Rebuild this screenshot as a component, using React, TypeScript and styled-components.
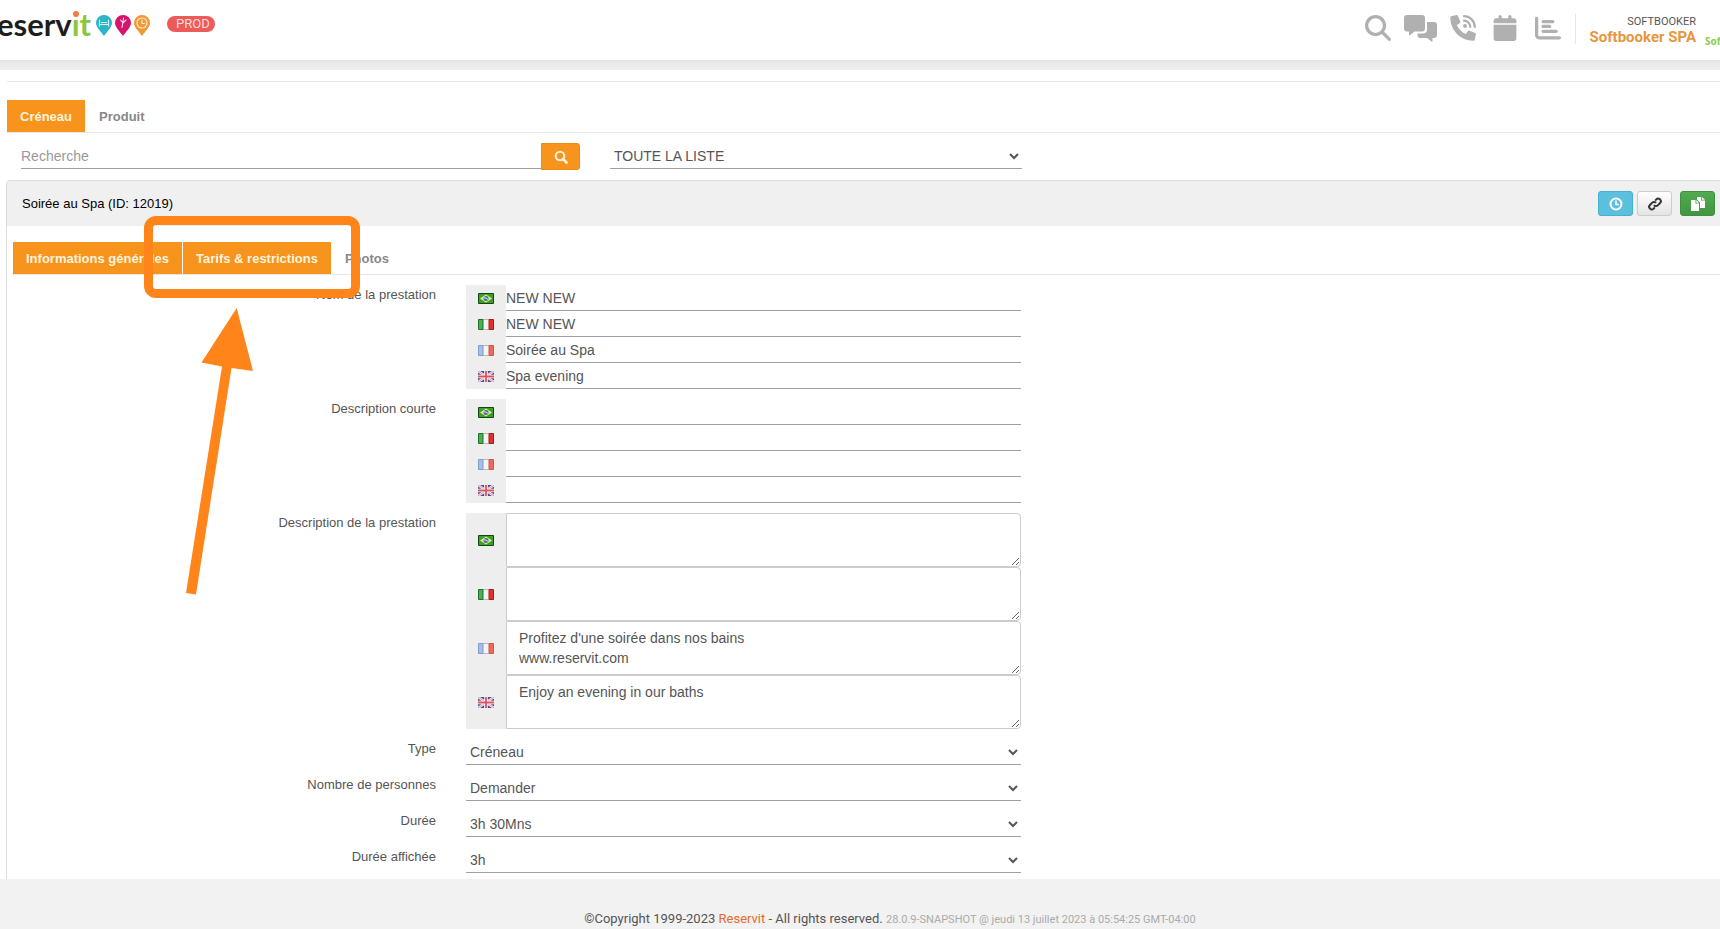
import React from 'react';
import styled, { createGlobalStyle } from 'styled-components';
import { FaMagnifyingGlass, FaCalendar, FaChartBar } from 'react-icons/fa6';

const accent = '#f7941e';
const marker = '#ff851b';
const line = '#e7e7e7';
const fieldLine = '#a0a0a0';

const GlobalStyle = createGlobalStyle`
  *, *::before, *::after { box-sizing: border-box; }
  html { background: #f2f2f2; overflow-x: hidden; }
  body {
    margin: 0;
    color: #555;
    font: 13px/20px "Liberation Sans", Arial, sans-serif;
  }
  button, input, select, textarea { font-family: inherit; }
`;

const Page = styled.div`
  position: relative;
  overflow: hidden;
`;

const Header = styled.header`
  display: flex;
  align-items: flex-start;
  height: 60px;
  background: #fff;
`;

const Brand = styled.a`
  margin-left: -3px;
  padding-top: 8px;
  color: #1d1d1b;
  font: 700 31px/32px Lato, sans-serif;
  text-decoration: none;

  em {
    position: relative;
    color: #8cc63f;
    font-style: normal;
  }

  em::before {
    content: "";
    position: absolute;
    left: 1px;
    top: 6px;
    width: 6px;
    height: 6px;
    border-radius: 50%;
    background: #ef7d3b;
    box-shadow: 0 0 0 1px #fff;
  }
`;

const Pins = styled.span`
  display: flex;
  gap: 3px;
  padding: 15px 0 0 5px;
`;

const Badge = styled.span`
  margin: 16px 0 0 17px;
  padding: 0 5px 0 9px;
  border-radius: 9px;
  background: #ec5a5a;
  color: #ffdcdc;
  font: 13px/16px Roboto, sans-serif;
`;

const Tools = styled.nav`
  display: flex;
  gap: 13px;
  margin-left: auto;
  padding-top: 13px;
`;

const ToolButton = styled.button<{ $wide?: boolean }>`
  display: flex;
  align-items: center;
  justify-content: center;
  width: ${(p) => (p.$wide ? 33 : 26)}px;
  height: 30px;
  padding: 0;
  border: 0;
  background: none;
  color: #b0b0b0;
`;

const Account = styled.div`
  height: 30px;
  margin: 14px 0 0 14px;
  padding-left: 14px;
  border-left: 1px solid ${line};
  color: #555;
  font: 11px/15px Roboto, sans-serif;
  text-align: right;

  strong {
    display: block;
    color: #e8963c;
    font-size: 15px;
    font-weight: 700;
    line-height: 17px;
  }
`;

const Partner = styled.div`
  width: 15px;
  margin: 31px 0 0 9px;
  color: #8ccf50;
  font: 700 10px/20px "Open Sans", sans-serif;
  white-space: nowrap;
`;

const Main = styled.main`
  padding: 11px 0 0 6px;
  background: #fff;
`;

const HeaderShade = styled.div`
  height: 10px;
  background: linear-gradient(#e6e6e6, #efefef);
`;

const TabBar = styled.div<{ $inset?: boolean }>`
  display: flex;
  gap: 1px;
  margin-left: ${(p) => (p.$inset ? 6 : 1)}px;
  padding-top: ${(p) => (p.$inset ? 16 : 18)}px;
  border: solid ${line};
  border-width: ${(p) => (p.$inset ? 0 : 1)}px 0 1px;
`;

const Tab = styled.button<{ $active?: boolean }>`
  height: 32px;
  padding: 0 13px;
  border: 0;
  background: ${(p) => (p.$active ? accent : 'transparent')};
  color: ${(p) => (p.$active ? '#fff3dc' : '#888')};
  font-size: 13px;
  font-weight: 700;
`;

const Filters = styled.form`
  display: grid;
  grid-template-columns: 559fr 412fr 668fr;
  column-gap: 30px;
  padding: 10px 0 10px 15px;
`;

const SearchGroup = styled.div`
  display: flex;
`;

const Input = styled.input`
  flex: 1;
  min-width: 0;
  height: 26px;
  padding: 0;
  border: 0;
  border-bottom: 1px solid ${fieldLine};
  background: #fff;
  color: #555;
  font-size: 14px;
  outline: 0;

  &::placeholder { color: #999; opacity: 1; }
`;

const Select = styled.select`
  width: 100%;
  height: 26px;
  padding: 0;
  border: 0;
  border-bottom: 1px solid ${fieldLine};
  border-radius: 0;
  background: #fff;
  color: #555;
  font-size: 14px;
`;

const SearchButton = styled.button`
  display: flex;
  align-items: center;
  justify-content: center;
  width: 39px;
  height: 27px;
  padding: 0;
  border: 1px solid #ee8a12;
  border-radius: 0 3px 3px 0;
  background: ${accent};
  color: #fff3dc;
`;

const Panel = styled.section`
  border: solid #ddd;
  border-width: 1px 0 0 1px;
  border-radius: 4px 0 0 0;
`;

const PanelHeading = styled.div`
  display: flex;
  align-items: center;
  gap: 4px;
  height: 45px;
  padding: 0 5px 0 15px;
  background: #f0f0f0;
  color: #000;
`;

const PanelTitle = styled.h1`
  flex: 1;
  margin: 0;
  font-size: 13px;
  font-weight: 400;
`;

const tones = {
  info: { fill: '#5bc0de', edge: '#46b0d0', ink: '#fff' },
  plain: { fill: 'linear-gradient(#fff, #e4e4e4)', edge: '#ccc', ink: '#333' },
  success: { fill: 'linear-gradient(#51ab51, #419641)', edge: '#3e8f3e', ink: '#fff' },
};

const ActionButton = styled.button<{ $tone: keyof typeof tones }>`
  display: flex;
  align-items: center;
  justify-content: center;
  width: 35px;
  height: 25px;
  padding: 0;
  border: 1px solid ${(p) => tones[p.$tone].edge};
  border-radius: 3px;
  background: ${(p) => tones[p.$tone].fill};
  color: ${(p) => tones[p.$tone].ink};

  &:last-child { margin-left: 4px; }
`;

const Form = styled.form`
  display: grid;
  row-gap: 10px;
  padding: 10px 0 6px 6px;
`;

const Row = styled.div`
  display: grid;
  grid-template-columns: 423fr 555fr 669fr;
  column-gap: 30px;
`;

const Label = styled.label`
  text-align: right;
`;

const Languages = styled.div`
  display: grid;
`;

const LanguageRow = styled.div`
  display: flex;
`;

const FlagCell = styled.span`
  display: flex;
  align-items: center;
  justify-content: center;
  width: 40px;
  background: #eee;
`;

const TextArea = styled.textarea`
  display: block;
  flex: 1;
  min-width: 0;
  height: 54px;
  padding: 6px 12px;
  border: 1px solid #ccc;
  border-radius: 0 4px 4px 0;
  background: #fff;
  color: #555;
  font-size: 14px;
  line-height: 20px;
  overflow: hidden;
`;

const Footer = styled.footer`
  padding: 30px 0 0 60px;
  background: #f2f2f2;
  font-family: Roboto, sans-serif;
  text-align: center;

  a { color: #e8692c; text-decoration: none; }
  small { color: #aaa; font-size: 11px; }
`;

const Highlight = styled.div`
  position: absolute;
  top: 216px;
  left: 144px;
  width: 216px;
  height: 82px;
  border: 9px solid ${marker};
  border-radius: 12px;
  pointer-events: none;
`;

const Arrow = styled.svg`
  position: absolute;
  top: 308px;
  left: 186px;
  pointer-events: none;
`;

function Pin({ color, children }: { color: string; children: React.ReactNode }) {
  return (
    <svg width="16" height="21" viewBox="0 0 16 21" aria-hidden="true">
      <path d="M8 0a8 8 0 0 1 8 8c0 4-4.500 8-8 13C4.500 16 0 12 0 8a8 8 0 0 1 8-8z" fill={color} />
      <g fill="none" stroke="#fff" strokeWidth="1.100" strokeOpacity=".85" strokeLinecap="round">{children}</g>
    </svg>
  );
}

function ChatIcon() {
  return (
    <svg width="33" height="27" viewBox="0 0 33 27" fill="currentColor" aria-hidden="true">
      <path d="M3 0h15a3 3 0 0 1 3 3v10.500a3 3 0 0 1-3 3h-7.500L6 20.200c-.5.400-1 .1-1-.5v-3.200H3a3 3 0 0 1-3-3V3a3 3 0 0 1 3-3z" />
      <path d="M23 7h7a3 3 0 0 1 3 3v10a3 3 0 0 1-3 3h-1.500v3c0 .6-.6.900-1 .5L23 23h-6.500a3 3 0 0 1-3-3v-1.500H19a4 4 0 0 0 4-4z" />
    </svg>
  );
}

function PhoneIcon() {
  return (
    <svg width="26" height="26" viewBox="0 0 26 26" aria-hidden="true">
      <path
        d="M1.300 1.300 6.500.1c.6-.1 1.200.2 1.400.7l2.400 5.600c.2.500.1 1.100-.4 1.500l-3 2.400c1.800 3.800 4.900 6.900 8.800 8.800l2.400-3c.4-.5 1-.6 1.500-.4l5.600 2.400c.5.200.8.800.7 1.400l-1.200 5.200c-.1.600-.6 1-1.200 1C10.500 25.700.3 15.500.3 2.500c0-.6.400-1.100 1-1.200z"
        fill="currentColor"
      />
      <g fill="none" stroke="currentColor" strokeWidth="2.200" strokeLinecap="round">
        <path d="M14 1.200A10.800 10.800 0 0 1 24.800 12" />
        <path d="M14 5.700A6.300 6.300 0 0 1 20.300 12" />
      </g>
      <circle cx="15" cy="11" r="2" fill="currentColor" />
    </svg>
  );
}

function SearchIcon() {
  return (
    <svg width="14" height="14" viewBox="0 0 14 14" fill="none" stroke="currentColor" aria-hidden="true">
      <circle cx="6" cy="6" r="4.300" strokeWidth="2" />
      <path d="M9 9l3.500 3.500" strokeWidth="2.600" strokeLinecap="round" />
    </svg>
  );
}

function ClockIcon() {
  return (
    <svg width="14" height="14" viewBox="0 0 14 14" fill="none" stroke="currentColor" aria-hidden="true">
      <circle cx="7" cy="7" r="5.500" strokeWidth="2" />
      <path d="M7 3.600V7.500H9.800" strokeWidth="1.500" />
    </svg>
  );
}

function LinkIcon() {
  return (
    <svg width="14" height="14" viewBox="0 0 14 14" fill="none" stroke="currentColor" strokeWidth="2" aria-hidden="true">
      <g transform="rotate(-45 7 7)">
        <path d="M4.500 9.300H2.800a2.600 2.600 0 0 1 0-5.200H6a2.600 2.600 0 0 1 2.600 2.900" />
        <path d="M9.500 4.700h1.700a2.600 2.600 0 0 1 0 5.200H8A2.600 2.600 0 0 1 5.400 7" />
      </g>
    </svg>
  );
}

function DuplicateIcon() {
  return (
    <svg width="14" height="14" viewBox="0 0 14 14" fill="currentColor" aria-hidden="true">
      <path d="M0 3h4.500v3.500H8V14H0z" />
      <path d="M5.300 3 8 5.700H5.300z" />
      <path d="M6 0h4v3.500h4V11H9V5.500L6 2.400z" />
      <path d="M10.800 0 14 2.800h-3.200z" />
    </svg>
  );
}

type Country = 'br' | 'it' | 'fr' | 'gb';

const countryNames: Record<Country, string> = {
  br: 'Portugais',
  it: 'Italien',
  fr: 'Français',
  gb: 'Anglais',
};

function Tricolour({ left, right, leftEdge, rightEdge }: Record<'left' | 'right' | 'leftEdge' | 'rightEdge', string>) {
  return (
    <>
      <path d="M0 0h16v11H0z" fill="#f4f4f4" />
      <path d="M5 .5h6M5 10.500h6" stroke="#bbb" />
      <path d="M.5.5h4.500v10H.5z" fill={left} stroke={leftEdge} />
      <path d="M11 .5h4.500v10H11z" fill={right} stroke={rightEdge} />
    </>
  );
}

function Flag({ country }: { country: Country }) {
  return (
    <svg width="16" height="11" viewBox="0 0 16 11" aria-hidden="true">
      {country === 'br' && (
        <>
          <path d="M.5.5h15v10H.5z" fill="#3f9c35" stroke="#0c4a10" />
          <path d="M8 1.500 14 5.500 8 9.500 2 5.500z" fill="#e6ee6a" />
          <circle cx="8" cy="5.500" r="2.500" fill="#3b6fb0" />
          <path d="M5.800 4.800q2.500-.3 4.200 1.700" stroke="#dfefff" fill="none" />
        </>
      )}
      {country === 'it' && <Tricolour left="#4bb04f" leftEdge="#21702a" right="#e03030" rightEdge="#b01818" />}
      {country === 'fr' && <Tricolour left="#a5bfe8" leftEdge="#7f9bd0" right="#ea6a5c" rightEdge="#d0584c" />}
      {country === 'gb' && (
        <>
          <path d="M0 0h16v11H0z" fill="#4b4a8c" />
          <path d="M0 0 16 11M16 0 0 11" stroke="#f3eef5" strokeWidth="2.400" />
          <path d="M0 0 16 11M16 0 0 11" stroke="#d8707c" strokeWidth=".7" />
          <path d="M8 0v11M0 5.500h16" stroke="#fff" strokeWidth="3.600" />
          <path d="M8 0v11M0 5.500h16" stroke="#d9545f" strokeWidth="1.800" />
        </>
      )}
    </svg>
  );
}

const countries: Country[] = ['br', 'it', 'fr', 'gb'];

interface TranslatedProps {
  id: string;
  label: string;
  values: string[];
  multiline?: boolean;
}

function TranslatedField({ id, label, values, multiline }: TranslatedProps) {
  const Field = multiline ? TextArea : Input;
  return (
    <Row>
      <Label htmlFor={`${id}-br`}>{label}</Label>
      <Languages>
        {countries.map((country, i) => (
          <LanguageRow key={country}>
            <FlagCell>
              <Flag country={country} />
            </FlagCell>
            <Field
              id={`${id}-${country}`}
              aria-label={`${label} – ${countryNames[country]}`}
              defaultValue={values[i]}
              spellCheck={false}
            />
          </LanguageRow>
        ))}
      </Languages>
    </Row>
  );
}

function SelectField({ id, label, value }: { id: string; label: string; value: string }) {
  return (
    <Row>
      <Label htmlFor={id}>{label}</Label>
      <Select id={id}>
        <option>{value}</option>
      </Select>
    </Row>
  );
}

export default function App() {
  return (
    <Page>
      <GlobalStyle />
      <Header>
        <Brand href="#">eserv<em>it</em></Brand>
        <Pins>
          <Pin color="#2cb5c6">
            <path d="M3.500 5v6M12.500 5v6M3.500 9.500h9M5.500 7.500h5" />
          </Pin>
          <Pin color="#d6146e">
            <path d="M8.500 3 7 12.500M8 8l3-3M7.500 7.500 5.500 5" />
          </Pin>
          <Pin color="#ef9a35">
            <circle cx="8" cy="8" r="5" />
            <path d="M8 5v3.500h2.500" />
          </Pin>
        </Pins>
        <Badge>PROD</Badge>
        <Tools aria-label="Outils">
          <ToolButton aria-label="Rechercher"><FaMagnifyingGlass size={26} /></ToolButton>
          <ToolButton $wide aria-label="Messages"><ChatIcon /></ToolButton>
          <ToolButton aria-label="Téléphone"><PhoneIcon /></ToolButton>
          <ToolButton $wide aria-label="Calendrier"><FaCalendar size={26} /></ToolButton>
          <ToolButton aria-label="Statistiques"><FaChartBar size={26} /></ToolButton>
        </Tools>
        <Account>
          SOFTBOOKER
          <strong>Softbooker SPA</strong>
        </Account>
        <Partner>Sof</Partner>
      </Header>
      <HeaderShade />

      <Main>
        <TabBar>
          <Tab $active>Créneau</Tab>
          <Tab>Produit</Tab>
        </TabBar>
        <Filters>
          <SearchGroup>
            <Input type="search" placeholder="Recherche" aria-label="Recherche" />
            <SearchButton type="button" aria-label="Lancer la recherche"><SearchIcon /></SearchButton>
          </SearchGroup>
          <Select aria-label="Liste">
            <option>TOUTE LA LISTE</option>
          </Select>
        </Filters>

        <Panel>
          <PanelHeading>
            <PanelTitle>Soirée au Spa (ID: 12019)</PanelTitle>
            <ActionButton $tone="info" aria-label="Horaires"><ClockIcon /></ActionButton>
            <ActionButton $tone="plain" aria-label="Lien"><LinkIcon /></ActionButton>
            <ActionButton $tone="success" aria-label="Dupliquer"><DuplicateIcon /></ActionButton>
          </PanelHeading>
          <TabBar $inset>
            <Tab $active>Informations générales</Tab>
            <Tab $active>Tarifs &amp; restrictions</Tab>
            <Tab>Photos</Tab>
          </TabBar>
          <Form>
            <TranslatedField id="name" label="Nom de la prestation" values={['NEW NEW', 'NEW NEW', 'Soirée au Spa', 'Spa evening']} />
            <TranslatedField id="short" label="Description courte" values={['', '', '', '']} />
            <TranslatedField
              id="description"
              label="Description de la prestation"
              values={['', '', "Profitez d'une soirée dans nos bains\nwww.reservit.com", 'Enjoy an evening in our baths']}
              multiline
            />
            <SelectField id="type" label="Type" value="Créneau" />
            <SelectField id="people" label="Nombre de personnes" value="Demander" />
            <SelectField id="duration" label="Durée" value="3h 30Mns" />
            <SelectField id="shown-duration" label="Durée affichée" value="3h" />
          </Form>
        </Panel>
      </Main>

      <Footer>
        ©Copyright 1999-2023 <a href="#">Reservit</a> - All rights reserved.{' '}
        <small>28.0.9-SNAPSHOT @ jeudi 13 juillet 2023 à 05:54:25 GMT-04:00</small>
      </Footer>

      <Highlight />
      <Arrow width="67" height="287" viewBox="0 0 67 287" fill={marker} aria-hidden="true">
        <path d="M50.700 0 67 63 45.500 60 10 286.500 0 285 36 58.500 15.500 54.500z" />
      </Arrow>
    </Page>
  );
}
